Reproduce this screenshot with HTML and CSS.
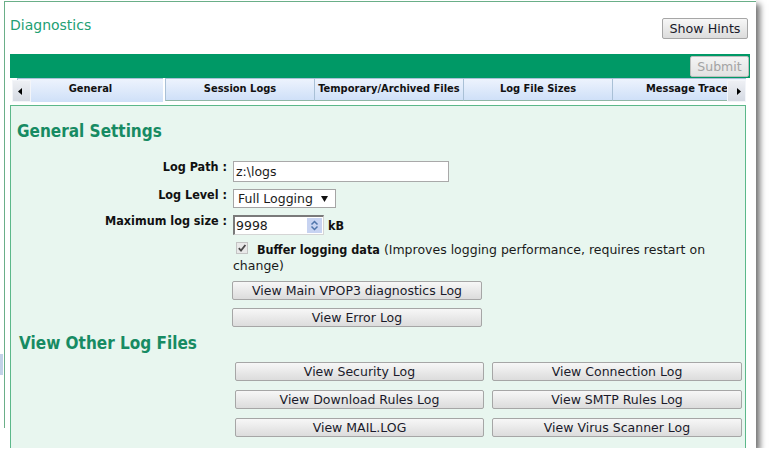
FILE: index.html
```html
<!DOCTYPE html>
<html lang="en">
<head>
<meta charset="utf-8">
<title>Diagnostics</title>
<link rel="stylesheet" href="styles.css">
</head>
<body>
<div class="shot">
  <div class="grip-col"><div class="grip"></div></div>
  <div class="frame">
    <div class="inner">
      <div class="header">
        <h1 class="title">Diagnostics</h1>
        <button class="btn hints">Show Hints</button>
      </div>
      <div class="toolbar"><button class="btn submit" disabled>Submit</button></div>
      <div class="tabs">
        <div class="tablist">
          <div class="tab active">General</div>
          <div class="tab">Session Logs</div>
          <div class="tab">Temporary/Archived Files</div>
          <div class="tab">Log File Sizes</div>
          <div class="tab">Message Trace</div>
        </div>
        <div class="arrow left"><svg width="4" height="7" viewBox="0 0 4 7"><polygon points="4,0 4,7 0,3.5" fill="#000"/></svg></div>
        <div class="arrow right"><svg width="4" height="7" viewBox="0 0 4 7"><polygon points="0,0 0,7 4,3.5" fill="#000"/></svg></div>
      </div>
      <div class="panel">
        <h2 class="section">General Settings</h2>
        <div class="form">
          <div class="lbl">Log Path :</div>
          <div class="field"><div class="text-input">z:\logs</div></div>
          <div class="lbl">Log Level :</div>
          <div class="field"><div class="select"><span>Full Logging</span><svg width="7" height="6" viewBox="0 0 7 6"><polygon points="0,0 7,0 3.5,6" fill="#111"/></svg></div></div>
          <div class="lbl">Maximum log size :</div>
          <div class="field">
            <div class="num"><span>9998</span><span class="spin"><svg width="15" height="15" viewBox="0 0 15 15"><rect width="15" height="15" fill="#c7d3f1"/><path d="M4.5 6.5 L7.5 3.5 L10.5 6.5" fill="none" stroke="#4f74aa" stroke-width="1.5"/><path d="M4.5 8.5 L7.5 11.5 L10.5 8.5" fill="none" stroke="#4f74aa" stroke-width="1.5"/></svg></span></div>
            <b class="unit">kB</b>
          </div>
          <p class="check-line"><span class="cb"><svg width="12" height="12" viewBox="0 0 12 12"><rect x="0.5" y="0.5" width="11" height="11" fill="#e9e9e9" stroke="#c4c4c4"/><path d="M2.8 6.2 L5 8.6 L9.4 3" fill="none" stroke="#4a4a4a" stroke-width="1.8"/></svg></span><b class="strong">Buffer logging data</b> <span class="note">(Improves logging performance, requires restart on change)</span></p>
          <div class="btn-col">
            <button class="btn wide">View Main VPOP3 diagnostics Log</button>
            <button class="btn wide">View Error Log</button>
          </div>
        </div>
        <h2 class="section second">View Other Log Files</h2>
        <div class="others">
          <button class="btn">View Security Log</button>
          <button class="btn">View Connection Log</button>
          <button class="btn">View Download Rules Log</button>
          <button class="btn">View SMTP Rules Log</button>
          <button class="btn">View MAIL.LOG</button>
          <button class="btn">View Virus Scanner Log</button>
        </div>
      </div>
    </div>
  </div>
</div>
</body>
</html>
```

FILE: styles.css
```css
* { box-sizing: border-box; }

body {
  margin: 0;
  background: #ffffff;
  font-family: "DejaVu Sans", Verdana, sans-serif;
  font-size: 12.5px;
  color: #1a1a1a;
}

.shot {
  display: flex;
  width: 756px;
  height: 448px;
  background: #ffffff;
  box-shadow: 4px 4px 6px rgba(0, 0, 0, 0.55);
  overflow: hidden;
}

.grip-col { width: 4px; flex: none; }
.grip {
  margin-top: 354px;
  width: 3px;
  height: 21px;
  background-image: radial-gradient(circle, #9fb9da 0.6px, transparent 0.9px);
  background-size: 2px 2px;
}

.frame {
  flex: 1;
  margin-top: 1px;
  height: 427px;
  border-top: 1px solid #6aaf88;
  border-left: 1px solid #6aaf88;
}

.inner { margin-left: 5px; width: 740px; }

.header {
  display: flex;
  justify-content: space-between;
  align-items: flex-start;
  height: 52px;
}

.title {
  margin: 13px 0 0;
  font-size: 14px;
  line-height: 20px;
  font-weight: normal;
  color: #22a073;
}

.btn {
  font-family: "DejaVu Sans", Verdana, sans-serif;
  font-size: 12.5px;
  color: #1a1a2a;
  background: linear-gradient(#f7f7f7, #dcdcdc);
  border: 1px solid #a6a6a6;
  border-radius: 2px;
  padding: 0;
  height: 19px;
  line-height: 17px;
  text-align: center;
  white-space: nowrap;
}

.hints {
  margin: 16px 2px 0 0;
  width: 86px;
  height: 21px;
  font-size: 12.7px;
}

.toolbar {
  height: 24px;
  background: #009966;
  display: flex;
  justify-content: flex-end;
  align-items: center;
}

.submit {
  width: 59px;
  height: 21px;
  margin-right: 1px;
  color: #a3a3a3;
  border-color: #bdbdbd;
  background: linear-gradient(#f4f4f4, #e2e2e2);
}

.tabs {
  position: relative;
  width: 736px;
  height: 24px;
  overflow: hidden;
  background: #ffffff;
}

.tablist {
  display: flex;
  align-items: flex-start;
  padding-left: 7px;
}

.tab {
  flex: none;
  width: 149px;
  height: 23px;
  border-top: 1px solid #a9c0d6;
  border-left: 1px solid #a9c0d6;
  border-bottom: 1px solid #8fb7a6;
  background: linear-gradient(#edf3fd, #cfe0f8);
  font-family: "DejaVu Sans Condensed", "DejaVu Sans", sans-serif;
  font-stretch: condensed;
  font-weight: bold;
  font-size: 11px;
  line-height: 20px;
  text-align: center;
  white-space: nowrap;
  overflow: hidden;
  color: #111111;
}

.tab.active {
  width: 146px;
  height: 24px;
  border-bottom: none;
  margin-right: 2px;
}

.arrow {
  position: absolute;
  top: 2px;
  width: 19px;
  height: 22px;
  border: 1px solid #f3f5f9;
  background: linear-gradient(#eef0f4, #d5dae3);
  display: flex;
  align-items: center;
}
.arrow svg { margin-top: 1px; }
.arrow.left { left: 2px; padding-left: 5px; }
.arrow.right { right: 0; padding-left: 9px; }

.panel {
  margin-top: 3px;
  width: 736px;
  height: 400px;
  border: 1px solid #5cb88a;
  background: #e8f6ef;
  padding-left: 6px;
}

.section {
  margin: 15px 0 0;
  font-family: "DejaVu Sans Condensed", "DejaVu Sans", sans-serif;
  font-stretch: condensed;
  font-weight: bold;
  font-size: 17px;
  line-height: 20px;
  color: #178b63;
}
.section.second { margin: 6px 0 0 2px; }

.form {
  display: grid;
  grid-template-columns: 210px 1fr;
  column-gap: 6px;
  row-gap: 7px;
  margin-top: 20px;
}

.lbl, .strong, .unit {
  font-family: "DejaVu Sans Condensed", "DejaVu Sans", sans-serif;
  font-stretch: condensed;
  font-weight: bold;
  font-size: 12.5px;
  color: #111111;
}

.lbl {
  text-align: right;
  line-height: 14px;
  margin-top: -1px;
}

.field { display: flex; align-items: center; }

.text-input {
  width: 216px;
  height: 21px;
  border: 1px solid #a9a9a9;
  background: #ffffff;
  padding-left: 2px;
  line-height: 19px;
}

.select {
  width: 103px;
  height: 19px;
  border: 1px solid #a5a5a5;
  background: #ffffff;
  padding: 0 7px 0 4px;
  line-height: 17px;
  display: flex;
  align-items: center;
  justify-content: space-between;
}

.num {
  width: 91px;
  height: 20px;
  border-style: solid;
  border-width: 2px 1px 1px 2px;
  border-color: #7a7a7a #d5d5d5 #d5d5d5 #7a7a7a;
  background: #ffffff;
  padding: 0 1px 0 1px;
  line-height: 17px;
  display: flex;
  align-items: center;
  justify-content: space-between;
}
.spin { display: flex; }

.unit { margin-left: 4px; }

.check-line {
  grid-column: 2;
  margin: 0;
  line-height: 16px;
}

.cb {
  display: inline-block;
  width: 12px;
  height: 12px;
  margin: 0 9px 0 3px;
  vertical-align: baseline;
}
.cb svg { display: block; }

.btn-col {
  grid-column: 2;
  display: flex;
  flex-direction: column;
  gap: 8px;
  margin-left: -1px;
}

.wide { width: 250px; }

.others {
  display: grid;
  grid-template-columns: 249px 250px;
  column-gap: 8px;
  row-gap: 9px;
  margin: 9px 0 0 218px;
}
```
